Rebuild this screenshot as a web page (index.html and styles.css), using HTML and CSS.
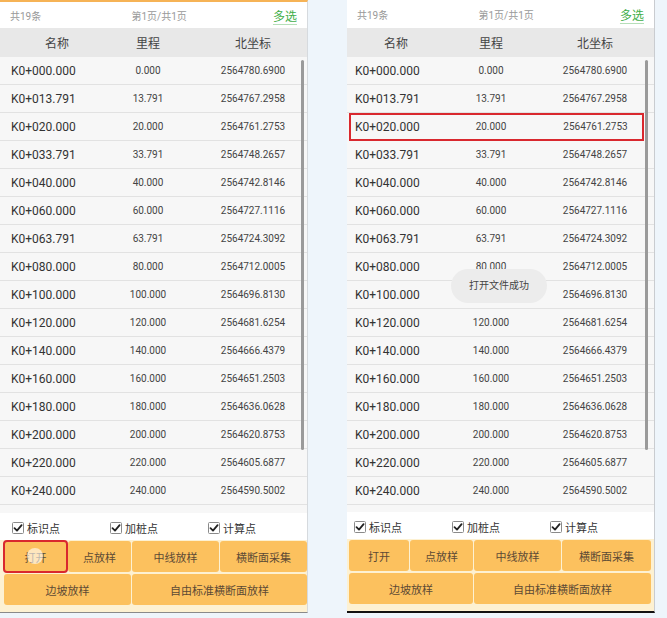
FILE: index.html
```html
<!DOCTYPE html>
<html lang="zh">
<head>
    <meta charset="UTF-8">
    <title>放样</title>
    <link rel="stylesheet" href="styles.css">
</head>
<body>
<div class="screens">

    <!-- left phone -->
    <section class="phone phone-left">
        <div class="topbar">
            <span class="total">共19条</span>
            <span class="page">第1页/共1页</span>
            <span class="multi">多选</span>
        </div>
        <div class="table-head">
            <div>名称</div>
            <div>里程</div>
            <div>北坐标</div>
        </div>
        <div class="list">
            <div class="row"><div>K0+000.000</div><div>0.000</div><div>2564780.6900</div></div>
            <div class="row"><div>K0+013.791</div><div>13.791</div><div>2564767.2958</div></div>
            <div class="row"><div>K0+020.000</div><div>20.000</div><div>2564761.2753</div></div>
            <div class="row"><div>K0+033.791</div><div>33.791</div><div>2564748.2657</div></div>
            <div class="row"><div>K0+040.000</div><div>40.000</div><div>2564742.8146</div></div>
            <div class="row"><div>K0+060.000</div><div>60.000</div><div>2564727.1116</div></div>
            <div class="row"><div>K0+063.791</div><div>63.791</div><div>2564724.3092</div></div>
            <div class="row"><div>K0+080.000</div><div>80.000</div><div>2564712.0005</div></div>
            <div class="row"><div>K0+100.000</div><div>100.000</div><div>2564696.8130</div></div>
            <div class="row"><div>K0+120.000</div><div>120.000</div><div>2564681.6254</div></div>
            <div class="row"><div>K0+140.000</div><div>140.000</div><div>2564666.4379</div></div>
            <div class="row"><div>K0+160.000</div><div>160.000</div><div>2564651.2503</div></div>
            <div class="row"><div>K0+180.000</div><div>180.000</div><div>2564636.0628</div></div>
            <div class="row"><div>K0+200.000</div><div>200.000</div><div>2564620.8753</div></div>
            <div class="row"><div>K0+220.000</div><div>220.000</div><div>2564605.6877</div></div>
            <div class="row"><div>K0+240.000</div><div>240.000</div><div>2564590.5002</div></div>
            <div class="row"><div>K0+260.000</div><div>260.000</div><div>2564575.3126</div></div>
            <div class="scrollbar"></div>
        </div>
        <div class="checks">
            <label><svg class="box" viewBox="0 0 12 12"><rect x="0.5" y="0.5" width="11" height="11" rx="1"/><polyline points="2.5,6.2 5,8.6 9.6,3.2"/></svg>标识点</label>
            <label><svg class="box" viewBox="0 0 12 12"><rect x="0.5" y="0.5" width="11" height="11" rx="1"/><polyline points="2.5,6.2 5,8.6 9.6,3.2"/></svg>加桩点</label>
            <label><svg class="box" viewBox="0 0 12 12"><rect x="0.5" y="0.5" width="11" height="11" rx="1"/><polyline points="2.5,6.2 5,8.6 9.6,3.2"/></svg>计算点</label>
        </div>
        <div class="buttons">
            <button class="btn btn-open pressed">打开<span class="touch"></span></button>
            <button class="btn btn-point">点放样</button>
            <button class="btn btn-mid">中线放样</button>
            <button class="btn btn-cross">横断面采集</button>
            <button class="btn btn-slope">边坡放样</button>
            <button class="btn btn-free">自由标准横断面放样</button>
        </div>
    </section>

    <!-- right phone -->
    <section class="phone phone-right">
        <div class="topbar">
            <span class="total">共19条</span>
            <span class="page">第1页/共1页</span>
            <span class="multi">多选</span>
        </div>
        <div class="table-head">
            <div>名称</div>
            <div>里程</div>
            <div>北坐标</div>
        </div>
        <div class="list">
            <div class="row"><div>K0+000.000</div><div>0.000</div><div>2564780.6900</div></div>
            <div class="row"><div>K0+013.791</div><div>13.791</div><div>2564767.2958</div></div>
            <div class="row selected"><div>K0+020.000</div><div>20.000</div><div>2564761.2753</div></div>
            <div class="row"><div>K0+033.791</div><div>33.791</div><div>2564748.2657</div></div>
            <div class="row"><div>K0+040.000</div><div>40.000</div><div>2564742.8146</div></div>
            <div class="row"><div>K0+060.000</div><div>60.000</div><div>2564727.1116</div></div>
            <div class="row"><div>K0+063.791</div><div>63.791</div><div>2564724.3092</div></div>
            <div class="row"><div>K0+080.000</div><div>80.000</div><div>2564712.0005</div></div>
            <div class="row"><div>K0+100.000</div><div>100.000</div><div>2564696.8130</div></div>
            <div class="row"><div>K0+120.000</div><div>120.000</div><div>2564681.6254</div></div>
            <div class="row"><div>K0+140.000</div><div>140.000</div><div>2564666.4379</div></div>
            <div class="row"><div>K0+160.000</div><div>160.000</div><div>2564651.2503</div></div>
            <div class="row"><div>K0+180.000</div><div>180.000</div><div>2564636.0628</div></div>
            <div class="row"><div>K0+200.000</div><div>200.000</div><div>2564620.8753</div></div>
            <div class="row"><div>K0+220.000</div><div>220.000</div><div>2564605.6877</div></div>
            <div class="row"><div>K0+240.000</div><div>240.000</div><div>2564590.5002</div></div>
            <div class="row"><div>K0+260.000</div><div>260.000</div><div>2564575.3126</div></div>
            <div class="scrollbar"></div>
            <div class="toast">打开文件成功</div>
        </div>
        <div class="checks">
            <label><svg class="box" viewBox="0 0 12 12"><rect x="0.5" y="0.5" width="11" height="11" rx="1"/><polyline points="2.5,6.2 5,8.6 9.6,3.2"/></svg>标识点</label>
            <label><svg class="box" viewBox="0 0 12 12"><rect x="0.5" y="0.5" width="11" height="11" rx="1"/><polyline points="2.5,6.2 5,8.6 9.6,3.2"/></svg>加桩点</label>
            <label><svg class="box" viewBox="0 0 12 12"><rect x="0.5" y="0.5" width="11" height="11" rx="1"/><polyline points="2.5,6.2 5,8.6 9.6,3.2"/></svg>计算点</label>
        </div>
        <div class="buttons">
            <button class="btn btn-open">打开</button>
            <button class="btn btn-point">点放样</button>
            <button class="btn btn-mid">中线放样</button>
            <button class="btn btn-cross">横断面采集</button>
            <button class="btn btn-slope">边坡放样</button>
            <button class="btn btn-free">自由标准横断面放样</button>
        </div>
    </section>

</div>
</body>
</html>
```

FILE: styles.css
```css
/* Base */
body {
    margin: 0;
    background-color: #eef5fb;
    font-family: Roboto, "Noto Sans CJK SC", sans-serif;
    color: #333;
}

.screens {
    display: flex;
    gap: 39px;
    height: 618px;
}

/* Phone frame */
.phone {
    display: flex;
    flex-direction: column;
    background-color: #f7f7f7;
    position: relative;
    overflow: hidden;
}

.phone-left {
    width: 307px;
    height: 610px;
    border-right: 1px solid #d6dade;
    border-top: 2px solid #f6b356;
    border-bottom: 1px solid #8a8a8a;
}

.phone-right {
    width: 307px;
    height: 611px;
    border-right: 1px solid #c9ccd0;
    border-bottom: 2px solid #111;
}

/* Top bar */
.topbar {
    display: flex;
    justify-content: space-between;
    align-items: center;
    height: 28px;
    padding: 0 10px;
    background-color: #ffffff;
    font-size: 10px;
    color: #999;
    flex-shrink: 0;
}

.phone-left .topbar {
    height: 26px;
}

.topbar .page {
    margin-left: 4px;
}

.topbar .multi {
    font-size: 12px;
    color: #3fae49;
    text-decoration: underline;
    text-decoration-color: #b6dfb9;
    text-underline-offset: 3px;
}

/* Table */
.table-head,
.row {
    display: grid;
    grid-template-columns: 96px 104px 106px;
    align-items: center;
}

.phone-right .table-head,
.phone-right .row {
    grid-template-columns: 88px 112px 96px;
}

.table-head {
    height: 29px;
    background-color: #e8e8e8;
    font-size: 12px;
    color: #444;
    text-align: center;
    flex-shrink: 0;
}

.table-head div:first-child {
    padding-left: 18px;
}

.phone-right .table-head div:first-child {
    padding-left: 10px;
}

.list {
    position: relative;
    flex: 1;
    overflow: hidden;
}

.row {
    height: 27px;
    border-bottom: 1px solid #e2e2e2;
    font-size: 10px;
    color: #444;
    text-align: center;
}

.row div:first-child {
    text-align: left;
    padding-left: 11px;
    font-size: 12px;
    color: #333;
}

.phone-right .row div:first-child {
    padding-left: 8px;
}

.phone-right .row.selected {
    outline: 2px solid #d9282e;
    outline-offset: -2px;
    margin: 0 10px 0 2px;
    grid-template-columns: 86px 112px 97px;
}

.row.selected div:first-child {
    padding-left: 6px;
}

.scrollbar {
    position: absolute;
    top: 3px;
    right: 3px;
    width: 3px;
    height: 390px;
    background-color: #9a9a9a;
    border-radius: 2px;
}

.phone-right .scrollbar {
    right: 6px;
}

.toast {
    position: absolute;
    top: 212px;
    left: 104px;
    width: 96px;
    height: 34px;
    line-height: 34px;
    text-align: center;
    font-size: 10px;
    color: #444;
    background-color: #ececec;
    border-radius: 17px;
}

/* Checkboxes */
.checks {
    display: grid;
    grid-template-columns: 98px 98px 1fr;
    align-items: center;
    height: 25px;
    padding: 2px 0 0 12px;
    background-color: #ffffff;
    font-size: 11px;
    color: #333;
    flex-shrink: 0;
}

.phone-right .checks {
    padding-left: 7px;
}

.checks label {
    display: flex;
    align-items: center;
    gap: 3px;
}

.checks .box {
    width: 12px;
    height: 12px;
    flex-shrink: 0;
}

.checks .box rect {
    fill: #fff;
    stroke: #8a8a8a;
    stroke-width: 1;
}

.checks .box polyline {
    fill: none;
    stroke: #222;
    stroke-width: 1.8;
    stroke-linecap: round;
    stroke-linejoin: round;
}

/* Buttons */
.buttons {
    display: grid;
    grid-template-columns: 63px 63px 87px 87px;
    grid-template-rows: 31px 31px;
    gap: 2px 1px;
    padding: 1px 3px 7px 4px;
    background-color: #fdf1d2;
    flex-shrink: 0;
}

.phone-right .buttons {
    grid-template-columns: 60px 63px 87px 89px;
    padding-left: 2px;
}

.btn {
    position: relative;
    border: none;
    border-radius: 3px;
    background-color: #fcc15e;
    color: #5d4a35;
    font-family: inherit;
    font-size: 11px;
    cursor: pointer;
    padding: 0;
}

.btn-slope {
    grid-column: 1 / 3;
}

.btn-free {
    grid-column: 3 / 5;
}

.btn.pressed {
    outline: 2px solid #d9282e;
    outline-offset: -1px;
}

.touch {
    position: absolute;
    top: 7px;
    left: 23px;
    width: 16px;
    height: 16px;
    border-radius: 50%;
    background-color: rgba(255, 255, 255, 0.6);
}
```
